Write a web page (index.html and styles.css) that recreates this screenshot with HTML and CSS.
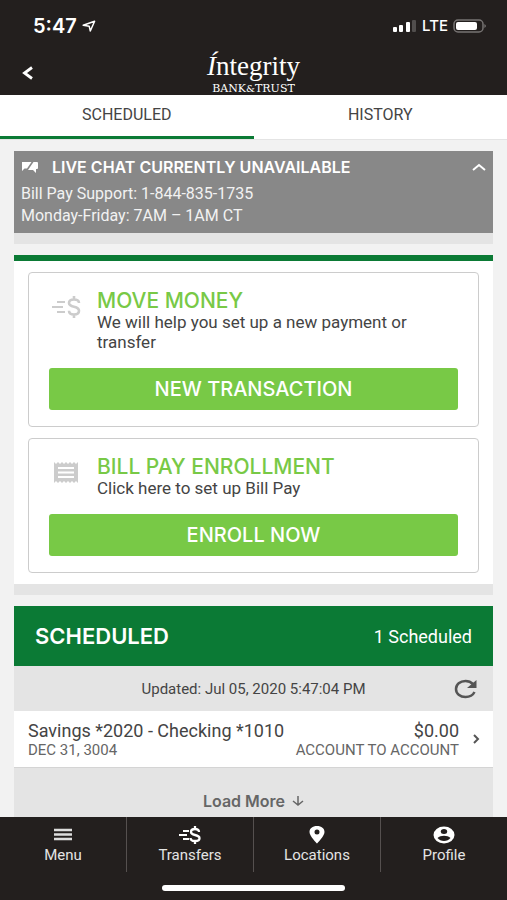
FILE: index.html
```html
<!DOCTYPE html>
<html lang="en">

<head>
    <meta charset="UTF-8">
    <meta name="viewport" content="width=device-width, initial-scale=1.0">
    <title>Integrity Bank &amp; Trust</title>
    <link rel="stylesheet" href="styles.css">
</head>

<body>
    <header class="header">
        <div class="status">
            <div class="status-time">
                <span>5:47</span>
                <svg width="14" height="12" viewBox="0 0 14 12" aria-hidden="true">
                    <path d="M1.2 5.3L12.6 1.2 8.3 11 7.2 6.2z" fill="none" stroke="#fff" stroke-width="1.5" stroke-linejoin="round" />
                </svg>
            </div>
            <div class="status-signal">
                <svg width="24" height="12" viewBox="0 0 24 12" aria-hidden="true">
                    <rect x="0" y="7" width="4" height="5" rx="1" fill="#fff" />
                    <rect x="6" y="5" width="4" height="7" rx="1" fill="#fff" />
                    <rect x="13" y="2" width="4" height="10" rx="1" fill="#fff" />
                    <rect x="19" y="0" width="4" height="12" rx="1" fill="#514e4d" />
                </svg>
                <span>LTE</span>
                <svg width="34" height="14" viewBox="0 0 34 14" aria-hidden="true">
                    <rect x="1" y="1" width="29" height="12" rx="4" fill="none" stroke="#777473" stroke-width="1.5" />
                    <rect x="3" y="3" width="21" height="8" rx="2" fill="#fff" />
                    <path d="M31.5 5q2.5 2 0 4z" fill="#8a8786" />
                </svg>
            </div>
        </div>
        <div class="title">
            <button class="back" type="button" aria-label="Back">
                <svg width="14" height="14" viewBox="0 0 14 14">
                    <path d="M12 1.5L4.5 7l7.5 5.5" fill="none" stroke="#fff" stroke-width="2.8" />
                </svg>
            </button>
            <div class="logo">
                <div class="logo-name"><em>Í</em>ntegrity</div>
                <div class="logo-sub">BANK<small>&amp;</small>TRUST</div>
            </div>
        </div>
    </header>

    <nav class="tabs">
        <a class="on" href="#scheduled">SCHEDULED</a>
        <a href="#history">HISTORY</a>
    </nav>

    <main class="content">
        <section class="chat">
            <button class="chat-head" type="button">
                <svg width="18" height="12" viewBox="0 0 18 12" aria-hidden="true">
                    <path d="M1 1h9.500L6 7.500H3.500L1 10zM12.500 1H16q1 0 1 1v5q0 1-1 1h-1v4l-3-3H7z" fill="#fff" />
                </svg>
                <span>LIVE CHAT CURRENTLY UNAVAILABLE</span>
                <svg class="chat-arrow" width="14" height="8" viewBox="0 0 14 8" aria-hidden="true">
                    <path d="M1 7l6-5 6 5" fill="none" stroke="#fff" stroke-width="2" />
                </svg>
            </button>
            <p>Bill Pay Support: 1-844-835-1735</p>
            <p>Monday-Friday: 7AM – 1AM CT</p>
        </section>

        <section class="panel">
            <article class="card">
                <div class="card-info">
                    <svg width="30" height="24" viewBox="0 0 30 24" aria-hidden="true">
                        <path d="M5 7h8M0 12h11M5 17h8" fill="none" stroke="#ccc" stroke-width="2" />
                        <path d="M27 8c0-2.5-2-3.5-5-3.5s-5 1-5 3.5 2 3 5 3.7 5 1.3 5 4-2 3.8-5 3.8-5-1.3-5-3.8M22 1v3.5M22 19.5V23" fill="none" stroke="#ccc" stroke-width="2.6" />
                    </svg>
                    <div>
                        <h2>MOVE MONEY</h2>
                        <p>We will help you set up a new payment or transfer</p>
                    </div>
                </div>
                <button class="btn" type="button">NEW TRANSACTION</button>
            </article>
            <article class="card">
                <div class="card-info">
                    <svg width="30" height="24" viewBox="0 0 30 24" aria-hidden="true">
                        <path d="M2 1l2 2 2-2 2 2 2-2 2 2 2-2 2 2 2-2 2 2 2-2 2 2 2-2v21l-2-2-2 2-2-2-2 2-2-2-2 2-2-2-2 2-2-2-2 2-2-2-2 2z" fill="#ccc" />
                        <path d="M6 7h16M6 11.5h16M6 16h16" stroke="#fff" stroke-width="2" />
                    </svg>
                    <div>
                        <h2>BILL PAY ENROLLMENT</h2>
                        <p>Click here to set up Bill Pay</p>
                    </div>
                </div>
                <button class="btn" type="button">ENROLL NOW</button>
            </article>
        </section>

        <section class="list" id="scheduled">
            <div class="list-head">
                <h2>SCHEDULED</h2>
                <span>1 Scheduled</span>
            </div>
            <div class="list-updated">
                <span>Updated: Jul 05, 2020 5:47:04 PM</span>
                <button type="button" aria-label="Refresh">
                    <svg width="24" height="20" viewBox="0 0 24 20">
                        <path d="M19 5C17 3 14.5 2 11.5 2 6 2 2 5.5 2 10s4 8 9.5 8c4 0 7.5-2 9-5" fill="none" stroke="#555" stroke-width="2.5" />
                        <path d="M22.5 1v8H13z" fill="#555" />
                    </svg>
                </button>
            </div>
            <a class="row" href="#transfer">
                <span class="row-left">
                    <span class="row-main">Savings *2020 - Checking *1010</span>
                    <span class="row-sub">DEC 31, 3004</span>
                </span>
                <span class="row-right">
                    <span class="row-main">$0.00</span>
                    <span class="row-sub">ACCOUNT TO ACCOUNT</span>
                </span>
                <svg width="7" height="10" viewBox="0 0 7 10" aria-hidden="true">
                    <path d="M1 1l4 4-4 4" fill="none" stroke="#555" stroke-width="2" />
                </svg>
            </a>
            <button class="more" type="button">
                <span>Load More</span>
                <svg width="12" height="10" viewBox="0 0 12 10" aria-hidden="true">
                    <path d="M6 0v9M1 5l5 4 5-4" fill="none" stroke="#666" stroke-width="1.5" />
                </svg>
            </button>
        </section>
    </main>

    <footer class="footer">
        <nav class="menu">
            <a href="#menu">
                <svg width="20" height="18" viewBox="0 0 20 18" aria-hidden="true">
                    <path d="M1 4h18M1 8.5h18M1 13h18" stroke="#ddd" stroke-width="2.5" />
                </svg>
                <span>Menu</span>
            </a>
            <a href="#transfers">
                <svg width="24" height="18" viewBox="0 0 24 18" aria-hidden="true">
                    <path d="M5 5h6M1 9h8M5 13h6" fill="none" stroke="#fff" stroke-width="2" />
                    <path d="M21 6c0-2-1.5-3-4-3s-4 1-4 3 1.5 2.5 4 3 4.5 1 4.5 3.2-2 2.8-4.500 2.8-4.500-1-4.500-3M17 0v3M17 15v3" fill="none" stroke="#fff" stroke-width="2.3" />
                </svg>
                <span>Transfers</span>
            </a>
            <a href="#locations">
                <svg width="16" height="18" viewBox="0 0 16 18" aria-hidden="true">
                    <path d="M8 0C3.5 0 .5 2.5.5 6 .5 10 8 17.5 8 17.5S15.5 10 15.5 6C15.5 2.5 12.5 0 8 0zm0 8.5a2.5 2.5 0 1 1 0-5 2.5 2.5 0 0 1 0 5z" fill="#fff" />
                </svg>
                <span>Locations</span>
            </a>
            <a href="#profile">
                <svg width="22" height="18" viewBox="0 0 22 18" aria-hidden="true">
                    <ellipse cx="11" cy="9" rx="10.5" ry="8.5" fill="#fff" />
                    <ellipse cx="11" cy="5.5" rx="3.2" ry="2.5" fill="#231f1e" />
                    <path d="M4.5 12c1.5-1.5 4-2.2 6.5-2.2s5 .7 6.5 2.2c-1.5 2-4 3-6.5 3s-5-1-6.500-3z" fill="#231f1e" />
                </svg>
                <span>Profile</span>
            </a>
        </nav>
        <div class="home"></div>
    </footer>
</body>

</html>
```

FILE: styles.css
```css
* {
    box-sizing: border-box;
}

body {
    margin: 0;
    height: 100vh;
    display: flex;
    flex-direction: column;
    background: #f2f2f2;
    color: #444;
    font-family: Roboto, "Liberation Sans", sans-serif;
}

h2,
p {
    margin: 0;
}

a {
    color: inherit;
    text-decoration: none;
}

button {
    border: 0;
    padding: 0;
    background: none;
    color: inherit;
    font: inherit;
    cursor: pointer;
}

svg {
    display: block;
    flex: none;
}

/* header */
.header {
    flex: none;
    height: 95px;
    padding: 16px 20px 0;
    background: #231f1e;
    color: #fff;
}

.status {
    display: flex;
    justify-content: space-between;
    height: 20px;
    padding-left: 13px;
}

.status-time,
.status-signal {
    display: flex;
    align-items: center;
    gap: 5px;
}

.status-time {
    font: 600 20px/20px Inter, sans-serif;
}

.status-signal {
    font: 500 15px/20px Inter, sans-serif;
}

.title {
    display: grid;
    grid-template-columns: 1fr auto 1fr;
    align-items: center;
    padding-top: 15px;
}

.back {
    justify-self: start;
}

.logo {
    text-align: center;
    font-family: "Liberation Serif", serif;
}

.logo-name {
    font-size: 27px;
    line-height: 31px;
}

.logo-sub {
    font: 11px/13px "DejaVu Serif", serif;
}

.logo-sub small {
    font-size: 10px;
}

/* tabs */
.tabs {
    flex: none;
    display: flex;
    height: 45px;
    background: #fff;
    border-bottom: 1px solid #e4e4e4;
}

.tabs a {
    flex: 1;
    padding-bottom: 2px;
    font-size: 16px;
    line-height: 39px;
    text-align: center;
}

.tabs .on {
    border-bottom: 3px solid #0b7a35;
}

.content {
    flex: 1;
    min-height: 0;
    overflow-y: auto;
    scrollbar-width: none;
    padding: 11px 14px 0;
}

/* live chat */
.chat {
    padding: 6px 7px;
    background: #888;
    color: #f2f2f2;
    box-shadow: 0 11px #e4e4e4;
    font-size: 16px;
    line-height: 22px;
}

.chat-head {
    display: flex;
    align-items: center;
    gap: 13px;
    width: 100%;
    padding-bottom: 6px;
    color: #fff;
    font: 600 16px/20px Inter, sans-serif;
}

.chat-arrow {
    margin-left: auto;
}

/* cards */
.panel {
    display: flex;
    flex-direction: column;
    gap: 11px;
    margin-top: 22px;
    padding: 11px 14px;
    background: #fff;
    border-top: 6px solid #0b7a35;
    box-shadow: 0 11px #e4e4e4;
}

.card {
    padding: 17px 20px 16px;
    border: 1px solid #ccc;
    border-radius: 4px;
}

.card-info {
    display: flex;
    gap: 15px;
    padding-left: 3px;
    font-size: 17px;
    line-height: 20px;
}

.card-info svg {
    margin-top: 5px;
}

.card h2 {
    color: #78c946;
    font: 500 21px/22px Inter, sans-serif;
}

.btn {
    display: block;
    width: 100%;
    margin-top: 16px;
    border-radius: 3px;
    background: #78c946;
    color: #fff;
    font: 500 20px/42px Inter, sans-serif;
}

/* scheduled list */
.list {
    margin-top: 22px;
    background: #e4e4e4;
}

.list-head {
    display: flex;
    align-items: center;
    justify-content: space-between;
    height: 60px;
    padding: 0 21px;
    background: #0b7a35;
    color: #fff;
    font-size: 18px;
}

.list-head h2 {
    font: 600 22px/24px Inter, sans-serif;
}

.list-updated {
    display: grid;
    grid-template-columns: 1fr auto 1fr;
    align-items: center;
    height: 45px;
    padding: 0 15px;
    font-size: 15px;
}

.list-updated span {
    grid-column: 2;
}

.list-updated button {
    justify-self: end;
}

.row {
    display: flex;
    align-items: center;
    height: 57px;
    padding: 0 13px 0 14px;
    background: #fff;
    border-bottom: 1px solid #d4d4d4;
}

.row-left,
.row-right {
    display: flex;
    flex-direction: column;
}

.row-right {
    margin-left: auto;
    margin-right: 14px;
    text-align: right;
}

.row-main {
    font-size: 18px;
    line-height: 21px;
}

.row-sub {
    color: #666;
    font-size: 15px;
    line-height: 18px;
}

.more {
    display: flex;
    align-items: center;
    justify-content: center;
    gap: 7px;
    width: 100%;
    padding: 22px 0;
    color: #666;
    font: 600 16px/22px Inter, sans-serif;
}

/* bottom menu */
.footer {
    flex: none;
    height: 83px;
    background: #231f1e;
    color: #e4e4e4;
}

.menu {
    display: flex;
    height: 55px;
}

.menu a {
    flex: 1;
    display: flex;
    flex-direction: column;
    align-items: center;
    gap: 2px;
    padding-top: 9px;
    font-size: 15px;
    line-height: 18px;
}

.menu a + a {
    border-left: 1px solid #55504f;
}

.home {
    width: 36%;
    height: 6px;
    margin: 13px auto 0;
    border-radius: 3px;
    background: #fff;
}
```
